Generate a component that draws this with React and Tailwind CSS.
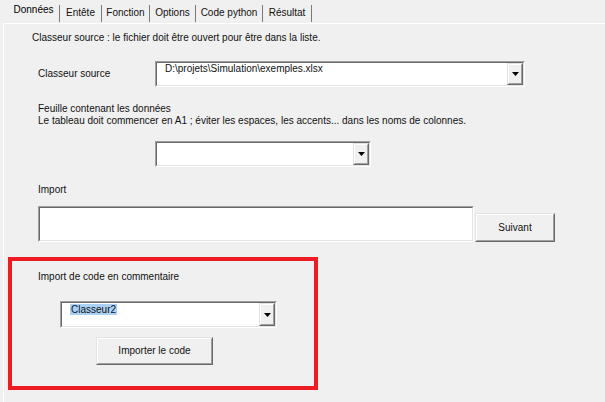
import React from "react";

function Sunken({ className = "", children }) {
  return (
    <div className={`border border-t-[#a0a0a0] border-l-[#a0a0a0] border-r-[#ffffff] border-b-[#ffffff] ${className}`}>
      <div className="flex h-full w-full border border-t-[#696969] border-l-[#696969] border-r-[#e3e3e3] border-b-[#e3e3e3] bg-white">
        {children}
      </div>
    </div>
  );
}

function Arrow() {
  return (
    <svg width="7" height="4" viewBox="0 0 7 4">
      <polygon points="0,0 7,0 3.5,4" fill="#000" />
    </svg>
  );
}

function DropBtn() {
  return (
    <div className="flex w-[16px] shrink-0 border border-t-[#e3e3e3] border-l-[#e3e3e3] border-r-[#696969] border-b-[#696969]">
      <div className="flex flex-1 items-center justify-center border border-t-white border-l-white border-r-[#a0a0a0] border-b-[#a0a0a0] bg-[#f0f0f0]">
        <Arrow />
      </div>
    </div>
  );
}

function Combo({ className = "", children }) {
  return (
    <Sunken className={className}>
      <div className="flex-1 overflow-hidden">{children}</div>
      <DropBtn />
    </Sunken>
  );
}

function Button({ className = "", children }) {
  return (
    <div className={`flex border border-t-[#e3e3e3] border-l-[#e3e3e3] border-r-[#696969] border-b-[#696969] ${className}`}>
      <div className="flex flex-1 items-center justify-center border border-t-white border-l-white border-r-[#a0a0a0] border-b-[#a0a0a0] bg-[#f0f0f0]">
        {children}
      </div>
    </div>
  );
}

const tabs = [
  { t: "Entête", w: "w-[41px]" },
  { t: "Fonction", w: "w-[47px]" },
  { t: "Options", w: "w-[45px]" },
  { t: "Code python", w: "w-[66px]" },
  { t: "Résultat", w: "w-[48px]" },
];

export default function App() {
  return (
    <div className="relative h-[402px] w-[605px] overflow-hidden bg-[#f0f0f0] font-['Liberation_Sans',Arial,sans-serif] text-[10px] leading-[12px] text-[#111]">
      {/* Tab strip */}
      <div className="flex h-[23px] items-end pl-[8px]">
        <div className="flex h-[21px] w-[51px] items-start justify-center pt-[2px] text-[#000]">Données</div>
        {tabs.map(({ t, w }) => (
          <div key={t} className="flex h-[20px] items-center">
            <div className="h-[17px] w-px bg-[#7a7a7a]" />
            <div className={`${w} text-center`}>{t}</div>
          </div>
        ))}
        <div className="flex h-[20px] items-center">
          <div className="h-[17px] w-px bg-[#7a7a7a]" />
        </div>
      </div>
      {/* Page */}
      <div className="ml-[3px] h-[379px] border-l border-t border-l-white border-t-white">
        <div className="ml-[28px] mt-[8px]">Classeur source : le fichier doit être ouvert pour être dans la liste.</div>

        <div className="mt-[17px] flex items-center">
          <div className="ml-[34px] w-[117px]">Classeur source</div>
          <Combo className="h-[26px] w-[370px]">
            <div className="pl-[8px] leading-[11px]">D:\projets\Simulation\exemples.xlsx</div>
          </Combo>
        </div>

        <div className="ml-[34px] mt-[16px]">
          <div>Feuille contenant les données</div>
          <div>Le tableau doit commencer en A1 ; éviter les espaces, les accents... dans les noms de colonnes.</div>
        </div>

        <Combo className="ml-[151px] mt-[14px] h-[26px] w-[216px]" />

        <div className="ml-[34px] mt-[17px]">Import</div>

        <div className="ml-[34px] mt-[10px] flex items-end">
          <Sunken className="h-[36px] w-[436px]" />
          <Button className="ml-px h-[29px] w-[80px]">Suivant</Button>
        </div>

        <div className="ml-[4px] mt-[15px] h-[133px] w-[310px] border-[4px] border-[#ed1c24]">
          <div className="ml-[26px] mt-[10px]">Import de code en commentaire</div>
          <Combo className="ml-[48px] mt-[18px] h-[27px] w-[217px]">
            <div className="pl-[8px] pt-[1px]">
              <span className="bg-[#a9d1f5] px-px leading-[12px]">Classeur2</span>
            </div>
          </Combo>
          <Button className="ml-[84px] mt-[9px] h-[28px] w-[117px]">Importer le code</Button>
        </div>
      </div>
    </div>
  );
}
